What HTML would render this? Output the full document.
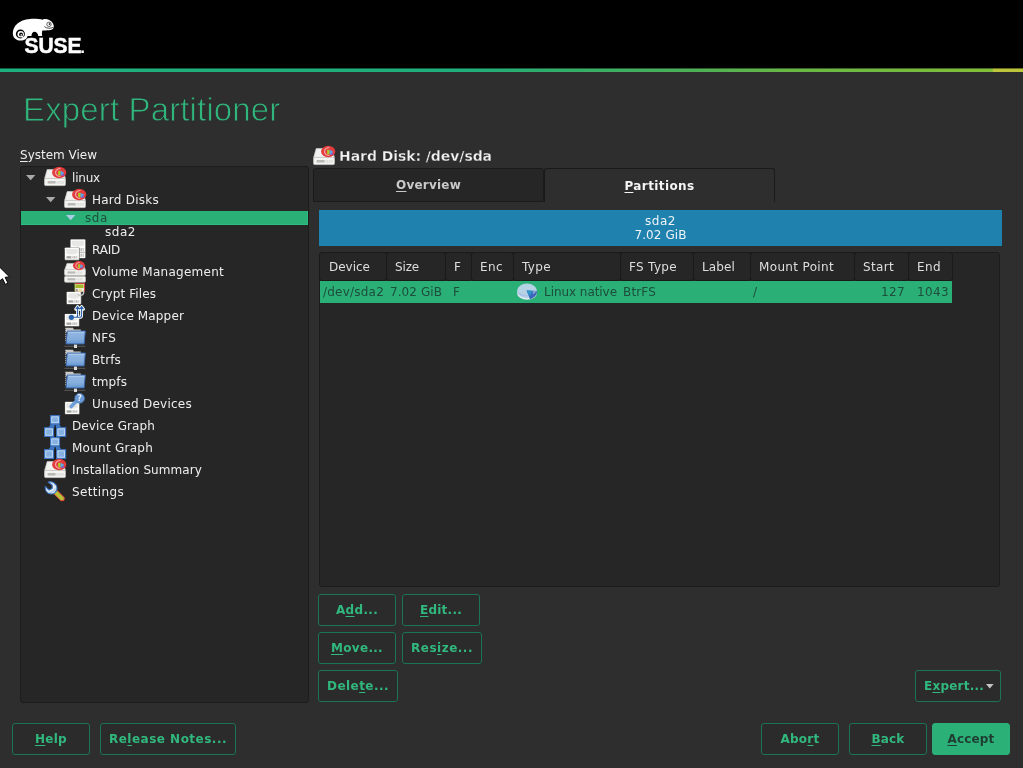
<!DOCTYPE html>
<html lang="en">
<head>
<meta charset="utf-8">
<title>Expert Partitioner</title>
<style>
html,body{margin:0;padding:0;}
body{width:1023px;height:768px;overflow:hidden;background:#2e2e2e;position:relative;
  font-family:"DejaVu Sans","Liberation Sans",sans-serif;font-size:12px;color:#eeeeee;}
.abs{position:absolute;}
#hdr{left:0;top:0;width:1023px;height:68px;background:#000;}
#gline{left:0;top:68px;width:1023px;height:4px;
  background:linear-gradient(to right,#1eb07e 0%,#1fae7c 45%,#36ae68 56%,#4eb056 68%,#68b846 77%,#74bb40 88%,#84bf3a 97%,#bcc53c 97.1%,#bcc53c 100%);}
#gline:before{content:"";position:absolute;left:0;top:0;width:100%;height:1px;background:rgba(0,0,0,.45);}
#title{left:23px;top:90px;height:40px;line-height:40px;font-family:"Liberation Sans",sans-serif;font-size:33px;color:#30b67c;white-space:nowrap;letter-spacing:0.14px;-webkit-text-stroke:.8px #2e2e2e;}
.lbl{margin-top:1px;white-space:nowrap;line-height:15px;height:15px;}
u{text-decoration:underline;text-decoration-thickness:1px;text-underline-offset:1.5px;text-decoration-skip-ink:none;}
.panel{background:#262626;border:1px solid #1c1c1c;border-radius:3px;box-sizing:border-box;}
.btn{box-sizing:border-box;height:32px;border:1px solid #1b7454;border-radius:3px;background:#2b2b2b;color:#31b87e;
  font-weight:bold;text-align:center;line-height:31px;white-space:nowrap;}

.row{left:0;margin-top:1px;height:22px;line-height:22px;white-space:nowrap;}
.ico{position:absolute;overflow:visible;}
.th{position:absolute;top:0;height:29px;box-sizing:border-box;background:#262626;border:1px solid #1a1a1a;border-radius:3px;line-height:29px;padding-left:8px;color:#dedede;white-space:nowrap;}
</style>
</head>
<body>
<svg width="0" height="0" style="position:absolute">
<defs>
<!-- disk base 22x19, origin at icon left/top -->
<g id="disk">
  <path d="M3.2 2.6 L18.8 2.6 L21.4 11.6 L0.6 11.6 Z" fill="#f1f1ef" stroke="#cfcfcb" stroke-width=".7"/>
  <rect x=".6" y="11.4" width="20.8" height="7.2" rx="1.2" fill="#f4f4f2" stroke="#c9c9c5" stroke-width=".8"/>
  <rect x="3.6" y="14" width="8" height="2.6" fill="#b9b9b6"/>
  <path d="M13 14v2.8M14.6 14v2.8M16.2 14v2.8M17.8 14v2.8M19.2 14v2.8" stroke="#cfcfcc" stroke-width=".7"/>
</g>
<g id="pie"><g transform="scale(1.06,.85)">
  <circle cx="0" cy="0" r="6.7" fill="#e23c3c"/>
  <path d="M1.2 -4.7 A4.7 4.7 0 1 0 1.2 4.7" fill="none" stroke="#f2a3a3" stroke-width="1.2"/>
  <rect x="-1" y="-2" width="2.3" height="5.4" fill="#b4cc22"/>
  <path d="M1.3 -2 L4.8 .4 L2.4 3.4 L1.3 3.4Z" fill="#5aa6e6"/>
  <rect x="2.6" y="1.8" width="2" height="2.2" fill="#9157c4"/>
</g></g>
<g id="diskpie"><use href="#disk"/><use href="#pie" x="15.2" y="5.5"/></g>
<g id="sdisk">
  <rect x=".2" y=".2" width="15" height="13" rx=".8" fill="#70706e"/>
  <rect x=".5" y=".5" width="14" height="12" rx=".6" fill="#fdfdfc"/>
  <path d="M1.8 1.8h11.4v4.2q-5.7 2.6-11.4 0Z" fill="#e7e7e5"/>
  <rect x="1.4" y="8.4" width="12.2" height="3.2" fill="#efefed"/>
  <rect x="2.2" y="9" width="4.6" height="2.2" fill="#a4a4a2"/>
  <path d="M8.6 9v2.2M10.2 9v2.2M11.8 9v2.2" stroke="#a8a8a6" stroke-width=".8"/>
</g>
<g id="folder">
  <path d="M.8 .8H8L8.8 2.4H15.8V5H.8Z" fill="#c9c9c7"/>
  <path d="M.8 .8V15" stroke="#d8d8d6" stroke-width=".9" stroke-dasharray="1.2 .8"/>
  <path d="M2.3 4.1H20.3L19.1 16.9H1Z" fill="url(#fgrad)" stroke="#3d6ab2" stroke-width="1"/>
  <path d="M3.2 5.3H19.2" stroke="#b7d3f0" stroke-width=".8"/>
  <path d="M-.6 19.3H20.4" stroke="#5c5c5c" stroke-width="1"/>
  <rect x="9" y="17.6" width="3" height="3.4" fill="#dcdcda"/>
</g>
<linearGradient id="fgrad" x1="0" y1="0" x2="0" y2="1"><stop offset="0" stop-color="#94b8e3"/><stop offset=".6" stop-color="#86aedd"/><stop offset="1" stop-color="#6697d2"/></linearGradient>
<g id="graph">
  <path d="M7 9L15 9L17.4 12.4L4.6 12.4Z" fill="#3f77c2"/>
  <path d="M11.1 10.2V22" stroke="#141414" stroke-width="1.3"/>
  <rect x="6.6" y=".7" width="8.9" height="8.2" fill="#85b1e1" stroke="#3b73c0" stroke-width="1.2"/>
  <rect x="7.8" y="1.9" width="6.5" height="5.8" fill="none" stroke="#cde2f4" stroke-width=".8"/>
  <rect x=".6" y="12.7" width="8.9" height="8.7" fill="#85b1e1" stroke="#3b73c0" stroke-width="1.2"/>
  <rect x="1.8" y="13.9" width="6.5" height="6.3" fill="none" stroke="#cde2f4" stroke-width=".8"/>
  <rect x="12.7" y="12.7" width="8.9" height="8.7" fill="#85b1e1" stroke="#3b73c0" stroke-width="1.2"/>
  <rect x="13.9" y="13.9" width="6.5" height="6.3" fill="none" stroke="#cde2f4" stroke-width=".8"/>
</g>
<path id="arr" d="M0 0h9.4L4.7 5.2Z"/>
</defs>
</svg>

<div id="wrap" class="abs" style="left:0;top:0;width:1023px;height:768px;will-change:transform">
<div id="hdr" class="abs"></div>
<div id="gline" class="abs"></div>

<!-- SUSE logo -->
<svg class="abs" style="left:0;top:0" width="100" height="68" viewBox="0 0 100 68">
  <path d="M12.8 33.2 C12.8 26 19 19.6 30 18.9 C35 18.6 40 19.1 42.8 19.7 L43.8 19.1 C47.5 18.9 52.6 20.6 53.7 25.4 C54 27 53.7 28.6 52 29.6 C49.5 30.7 45 30.5 42.4 30.4 C41.7 32 41.9 34.5 42.2 35.9 L38.3 35.9 C38.1 33.6 36.2 31.7 34.6 31.7 C32.6 31.7 31.5 33.6 31.5 35.9 L27.4 35.9 C27.6 38.6 24.4 40.6 20.2 40.5 C16 40.4 12.8 37.6 12.8 33.2 Z" fill="#fff"/>
  <circle cx="20.4" cy="33.9" r="4.5" fill="#000"/>
  <circle cx="20.7" cy="34.2" r="3.2" fill="#fff"/>
  <circle cx="21" cy="34.5" r="1.9" fill="#000"/>
  <circle cx="21.2" cy="34.7" r=".8" fill="#fff"/>
  <rect x="21" y="35.2" width="4" height="1.2" fill="#fff" transform="rotate(35 21 35.2)"/>
  <circle cx="49" cy="24.3" r="2.2" fill="#fff" stroke="#000" stroke-width=".6"/>
  <circle cx="49.5" cy="24.1" r=".8" fill="#000"/>
  <path d="M44.4 26.6 C47 28.7 50.5 28.6 53.5 27.3" stroke="#000" stroke-width=".7" fill="none"/>
  <text x="24.4" y="52.5" font-family="Liberation Sans, sans-serif" font-weight="bold" font-size="21.2" fill="#fff" stroke="#fff" stroke-width=".5" textLength="57.2" lengthAdjust="spacingAndGlyphs">SUSE</text>
  <text x="80.3" y="52.6" font-family="Liberation Sans, sans-serif" font-weight="bold" font-size="17" fill="#fff">.</text>
</svg>

<div id="title" class="abs">Expert Partitioner</div>

<div class="abs lbl" style="left:20px;top:147px"><span style="letter-spacing:-0.004px"><u>S</u>ystem View</span></div>

<!-- TREE -->
<div id="tree" class="abs panel" style="left:20px;top:166px;width:289px;height:537px;"></div>
<div id="treerows" class="abs" style="left:0;top:0;width:0;height:0;">
<!-- selected band -->
<div class="abs" style="left:21px;top:211px;width:287px;height:14px;background:#2ab077;box-shadow:inset -1px -1px 0 #2ebd81;"></div>
<!-- arrows -->
<svg class="ico" style="left:26px;top:175px" width="10" height="6"><use href="#arr" fill="#a9a9a9"/></svg>
<svg class="ico" style="left:46px;top:197px" width="10" height="6"><use href="#arr" fill="#a9a9a9"/></svg>
<svg class="ico" style="left:66px;top:215px" width="10" height="6"><use href="#arr" fill="#a9cbe6"/></svg>
<!-- row: linux -->
<svg class="ico" style="left:44px;top:167px" width="22" height="19"><use href="#diskpie"/></svg>
<div class="abs row" style="left:72px;top:166px"><span style="letter-spacing:-0.197px">linux</span></div>
<!-- Hard Disks -->
<svg class="ico" style="left:64px;top:189px" width="22" height="19"><use href="#diskpie"/></svg>
<div class="abs row" style="left:92px;top:188px"><span style="letter-spacing:0.244px">Hard Disks</span></div>
<!-- sda -->
<div class="abs row" style="left:85px;top:210px;height:14px;line-height:14px;color:#1d4d3b"><span style="letter-spacing:0.589px">sda</span></div>
<div class="abs row" style="left:105px;top:224px;height:14px;line-height:14px"><span style="letter-spacing:0.535px">sda2</span></div>
<!-- RAID -->
<svg class="ico" style="left:64px;top:239px" width="22" height="22">
  <rect x="6.3" y=".2" width="15.4" height="19.2" rx=".8" fill="#70706e"/>
  <rect x="6.6" y=".5" width="14.6" height="18.4" rx=".6" fill="#fdfdfc"/>
  <path d="M7.8 1.8h12.2v4.4q-6.1 2.6-12.2 0Z" fill="#e7e7e5"/>
  <path d="M16 9v3.4M17.6 9v3.4M19.2 9v3.4M16 14.6v3.2M17.6 14.6v3.2M19.2 14.6v3.2" stroke="#a8a8a6" stroke-width=".8"/>
  <path d="M6.6 13.4h14.6" stroke="#8a8a88" stroke-width=".6"/>
  <g transform="translate(0.4,8.2)"><use href="#sdisk"/></g>
</svg>
<div class="abs row" style="left:92px;top:238px"><span style="letter-spacing:-0.211px">RAID</span></div>
<!-- Volume Management -->
<svg class="ico" style="left:64px;top:261px" width="22" height="22">
  <path d="M3 2.4h16l2.4 6.8H.6Z" fill="#f1f1ef" stroke="#cfcfcb" stroke-width=".7"/>
  <rect x=".6" y="8.6" width="20.8" height="5.8" rx="1" fill="#f4f4f2" stroke="#c4c4c0" stroke-width=".8"/>
  <rect x="3.4" y="10.4" width="8" height="2.2" fill="#b9b9b6"/>
  <path d="M13 10.4v2.4M14.6 10.4v2.4M16.2 10.4v2.4M17.8 10.4v2.4" stroke="#cfcfcc" stroke-width=".7"/>
  <rect x=".6" y="15.2" width="20.8" height="6" rx="1" fill="#f4f4f2" stroke="#c4c4c0" stroke-width=".8"/>
  <rect x="3.4" y="17.2" width="8" height="2.2" fill="#b9b9b6"/>
  <path d="M13 17.2v2.4M14.6 17.2v2.4M16.2 17.2v2.4M17.8 17.2v2.4" stroke="#cfcfcc" stroke-width=".7"/>
  <g transform="translate(15,4.6) scale(.85,.8)"><use href="#pie"/></g>
</svg>
<div class="abs row" style="left:92px;top:260px"><span style="letter-spacing:0.265px">Volume Management</span></div>
<!-- Crypt Files -->
<svg class="ico" style="left:64px;top:283px" width="22" height="22">
  <g transform="translate(2.3,8.4)"><use href="#sdisk"/></g>
  <rect x="10.2" y=".1" width="10.8" height="8.6" fill="#e03c3c"/>
  <rect x="10.2" y=".1" width="1" height="8.6" fill="#3f8a2c"/>
  <rect x="11.2" y="1" width="8.8" height="7.7" fill="#f1f1ed"/>
  <rect x="11.4" y="1.4" width="8.2" height="3.7" fill="#a3b728"/>
  <rect x="11.8" y="6" width="2" height="2.4" fill="#9c9c9a"/>
  <rect x="14.4" y="6" width="3.4" height="2.4" fill="#e6df86"/>
  <path d="M19.2 7.2C20.2 9.6 19.6 11.8 17.2 12.4C15.6 12.8 14.4 12.2 13.8 11.2" fill="none" stroke="#c9c9c5" stroke-width="1.4"/>
</svg>
<div class="abs row" style="left:92px;top:282px"><span style="letter-spacing:0.101px">Crypt Files</span></div>
<!-- Device Mapper -->
<svg class="ico" style="left:64px;top:305px" width="22" height="22">
  <g transform="translate(.4,8.6)"><use href="#sdisk"/></g>
  <path d="M7.4 12.3H11.6Q13.6 12.3 13.6 10.4V2M11 12.3H15.6Q17.6 12.3 17.6 10.4V2M11.7 4.2L13.6 1.5L15.5 4.2M15.7 4.2L17.6 1.5L19.5 4.2" fill="none" stroke="#fff" stroke-width="2.9" stroke-linecap="round" stroke-linejoin="round"/>
  <path d="M7.4 12.3H11.6Q13.6 12.3 13.6 10.4V2M11 12.3H15.6Q17.6 12.3 17.6 10.4V2M11.7 4.2L13.6 1.5L15.5 4.2M15.7 4.2L17.6 1.5L19.5 4.2" fill="none" stroke="#2b62ad" stroke-width="1.1" stroke-linejoin="round"/>
  <circle cx="7.4" cy="12.3" r="2.6" fill="#2b62ad"/>
</svg>
<div class="abs row" style="left:92px;top:304px"><span style="letter-spacing:0.144px">Device Mapper</span></div>
<!-- NFS / Btrfs / tmpfs -->
<svg class="ico" style="left:65px;top:327px" width="21" height="21"><use href="#folder"/></svg>
<div class="abs row" style="left:92px;top:326px"><span style="letter-spacing:0.234px">NFS</span></div>
<svg class="ico" style="left:65px;top:349px" width="21" height="21"><use href="#folder"/></svg>
<div class="abs row" style="left:92px;top:348px"><span style="letter-spacing:0.128px">Btrfs</span></div>
<svg class="ico" style="left:65px;top:371px" width="21" height="21"><use href="#folder"/></svg>
<div class="abs row" style="left:92px;top:370px"><span style="letter-spacing:0.100px">tmpfs</span></div>
<!-- Unused Devices -->
<svg class="ico" style="left:64px;top:393px" width="22" height="22">
  <g transform="translate(.6,8.4)"><use href="#sdisk"/></g>
  <path d="M7.2 13.6L13 7.4" stroke="#6f9fd6" stroke-width="3.6" stroke-linecap="round"/>
  <circle cx="15.6" cy="5.4" r="4.8" fill="#6a9ad4" stroke="#4a7fc0" stroke-width=".8"/>
  <text x="15.6" y="8.4" font-family="DejaVu Sans, sans-serif" font-weight="bold" font-size="8" fill="#e8f0fa" text-anchor="middle">?</text>
</svg>
<div class="abs row" style="left:92px;top:392px"><span style="letter-spacing:0.260px">Unused Devices</span></div>
<!-- Device Graph / Mount Graph -->
<svg class="ico" style="left:44px;top:415px" width="22" height="22"><use href="#graph"/></svg>
<div class="abs row" style="left:72px;top:414px"><span style="letter-spacing:0.111px">Device Graph</span></div>
<svg class="ico" style="left:44px;top:437px" width="22" height="22"><use href="#graph"/></svg>
<div class="abs row" style="left:72px;top:436px"><span style="letter-spacing:0.251px">Mount Graph</span></div>
<!-- Installation Summary -->
<svg class="ico" style="left:44px;top:459px" width="22" height="19"><use href="#diskpie"/></svg>
<div class="abs row" style="left:72px;top:458px"><span style="letter-spacing:0.086px">Installation Summary</span></div>
<!-- Settings -->
<svg class="ico" style="left:44px;top:481px" width="22" height="22">
  <path d="M12.4 8.8L20.2 16.6L20 19.4L17 19.8L9.4 12.2Z" fill="#b5c23a" stroke="#e8453c" stroke-width="1"/>
  <path d="M4.2 1C8.6 0 12.8 2.8 13 7.2C13.1 10.8 10.2 13.3 6.6 12.9C3.2 12.5.8 9.6 1.2 5.4L5 9L8.2 7.6L8.2 4.2Z" fill="#e1ecf7" stroke="#3a72c0" stroke-width="1.1" stroke-linejoin="round"/>
  <path d="M5.4 11.2C8.4 11.8 11 10 11.4 7.4" fill="none" stroke="#a9c6e6" stroke-width="1.2"/>
</svg>
<div class="abs row" style="left:72px;top:480px"><span style="letter-spacing:0.348px">Settings</span></div>

</div>

<!-- RIGHT -->
<svg class="ico" style="left:313px;top:146px" width="22" height="19"><use href="#diskpie"/></svg>
<div class="abs" style="left:339px;top:146px;height:20px;line-height:20px;font-size:14px;font-weight:bold;color:#f2f2f2;-webkit-text-stroke:.3px #2e2e2e;white-space:nowrap;"><span style="letter-spacing:-0.062px">Hard Disk: /dev/sda</span></div>
<!-- tabs -->
<div class="abs" style="left:313px;top:168px;width:231px;height:34px;box-sizing:border-box;background:#262626;border:1px solid #1a1a1a;border-radius:3px 3px 0 0;text-align:center;line-height:33px;font-weight:bold;color:#c9c9c9"><span style="letter-spacing:0.219px"><u>O</u>verview</span></div>
<div class="abs" style="left:544px;top:168px;width:231px;height:34px;box-sizing:border-box;background:#2e2e2e;border:1px solid #1a1a1a;border-bottom:none;border-radius:3px 3px 0 0;text-align:center;line-height:35px;font-weight:bold;color:#f4f4f4"><span style="letter-spacing:0.388px"><u>P</u>artitions</span></div>
<!-- blue bar -->
<div class="abs" style="left:319px;top:210px;width:683px;height:36px;background:#1f82ae;color:#eef4f8;text-align:center;line-height:14px;box-sizing:border-box;padding-top:4px;"><span style="letter-spacing:0.535px">sda2</span><br><span style="letter-spacing:0.074px">7.02 GiB</span></div>
<!-- table -->
<div class="abs panel" style="left:319px;top:252px;width:681px;height:335px;"></div>
<div class="abs" style="left:320px;top:252px;width:640px;height:29px;">
  <div class="th" style="left:-1px;width:68px;padding-left:9px"><span style="letter-spacing:-0.008px">Device</span></div>
  <div class="th" style="left:66px;width:60px"><span style="letter-spacing:-0.160px">Size</span></div>
  <div class="th" style="left:125px;width:27px"><span style="letter-spacing:0.094px">F</span></div>
  <div class="th" style="left:151px;width:43px"><span style="letter-spacing:0.401px">Enc</span></div>
  <div class="th" style="left:193px;width:108px"><span style="letter-spacing:0.355px">Type</span></div>
  <div class="th" style="left:300px;width:74px"><span style="letter-spacing:0.328px">FS Type</span></div>
  <div class="th" style="left:373px;width:58px"><span style="letter-spacing:0.125px">Label</span></div>
  <div class="th" style="left:430px;width:105px"><span style="letter-spacing:0.342px">Mount Point</span></div>
  <div class="th" style="left:534px;width:55px"><span style="letter-spacing:0.334px">Start</span></div>
  <div class="th" style="left:588px;width:45px"><span style="letter-spacing:0.396px">End</span></div>
</div>
<div class="abs" style="left:320px;top:281px;width:632px;height:22px;background:#2ab077;color:#1d4d3b;line-height:23px;white-space:nowrap;">
  <span class="abs" style="left:3px"><span style="letter-spacing:0.217px">/dev/sda2</span></span>
  <span class="abs" style="left:70px"><span style="letter-spacing:0.074px">7.02 GiB</span></span>
  <span class="abs" style="left:133px"><span style="letter-spacing:0.094px">F</span></span>
  <svg class="ico" style="left:196px;top:2px" width="22" height="18">
    <ellipse cx="11" cy="10" rx="9.9" ry="6.7" fill="#dde8f1"/>
    <ellipse cx="11" cy="7.8" rx="9.9" ry="7.3" fill="#b6d2e5"/>
    <path d="M2.6 9.4C5 12.4 8 13 11.6 12.6" fill="none" stroke="#a9c2e6" stroke-width="1.6"/>
    <path d="M10.6 7.6L20.9 8C21 9.6 20.8 10.8 20 12C18.6 14 16.4 15.6 14 16.2Z" fill="#3d63bb"/>
    <path d="M10.6 7.6L16.4 7.8L14.6 12.6L13 12.4Z" fill="#2e93c8"/>
    <path d="M16.6 7.8L20.9 8L17 11.8Z" fill="#7ea3cf"/>
  </svg>
  <span class="abs" style="left:224px"><span style="letter-spacing:-0.053px">Linux native</span></span>
  <span class="abs" style="left:303px"><span style="letter-spacing:0.163px">BtrFS</span></span>
  <span class="abs" style="left:433px"><span style="letter-spacing:-0.047px">/</span></span>
  <span class="abs" style="left:534px;width:51px;text-align:right"><span style="letter-spacing:0.365px">127</span></span>
  <span class="abs" style="left:588px;width:41px;text-align:right"><span style="letter-spacing:0.363px">1043</span></span>
</div>
<!-- action buttons -->
<div class="abs btn" style="left:318px;top:594px;width:78px"><span style="letter-spacing:0.307px">A<u>d</u>d...</span></div>
<div class="abs btn" style="left:402px;top:594px;width:78px"><span style="letter-spacing:0.241px"><u>E</u>dit...</span></div>
<div class="abs btn" style="left:318px;top:632px;width:78px"><span style="letter-spacing:0.310px"><u>M</u>ove...</span></div>
<div class="abs btn" style="left:402px;top:632px;width:80px"><span style="letter-spacing:0.507px">Res<u>i</u>ze...</span></div>
<div class="abs btn" style="left:318px;top:670px;width:80px"><span style="letter-spacing:0.455px">Dele<u>t</u>e...</span></div>
<div class="abs btn" style="left:915px;top:670px;width:86px;text-align:left;padding-left:8px"><span style="letter-spacing:0.222px">E<u>x</u>pert...</span></div>
<svg class="ico" style="left:986px;top:684px" width="8" height="5"><path d="M0 0h7.6L3.8 4.4Z" fill="#c4c4c4"/></svg>


<!-- BUTTONS -->
<div class="abs btn" style="left:12px;top:723px;width:78px"><span style="letter-spacing:0.277px"><u>H</u>elp</span></div>
<div class="abs btn" style="left:100px;top:723px;width:136px"><span style="letter-spacing:0.489px">Re<u>l</u>ease Notes...</span></div>
<div class="abs btn" style="left:761px;top:723px;width:78px"><span style="letter-spacing:0.244px">Abo<u>r</u>t</span></div>
<div class="abs btn" style="left:849px;top:723px;width:78px"><span style="letter-spacing:0.164px"><u>B</u>ack</span></div>
<div class="abs btn" style="left:932px;top:723px;width:78px;background:#2bb078;border-color:#2bb078;color:#1f3d32"><span style="letter-spacing:0.169px"><u>A</u>ccept</span></div>

<!-- cursor -->
<svg class="abs" style="left:0;top:255px" width="20" height="40" viewBox="0 255 20 40">
  <path d="M-2.6 264.8 L9.5 276.9 L5.1 277.3 L8 283.1 L5.3 284.4 L2.5 278.7 L-2.6 282.8Z" fill="#fff" stroke="#000" stroke-width="1" stroke-linejoin="round"/>
</svg>
</div>
</body>
</html>
